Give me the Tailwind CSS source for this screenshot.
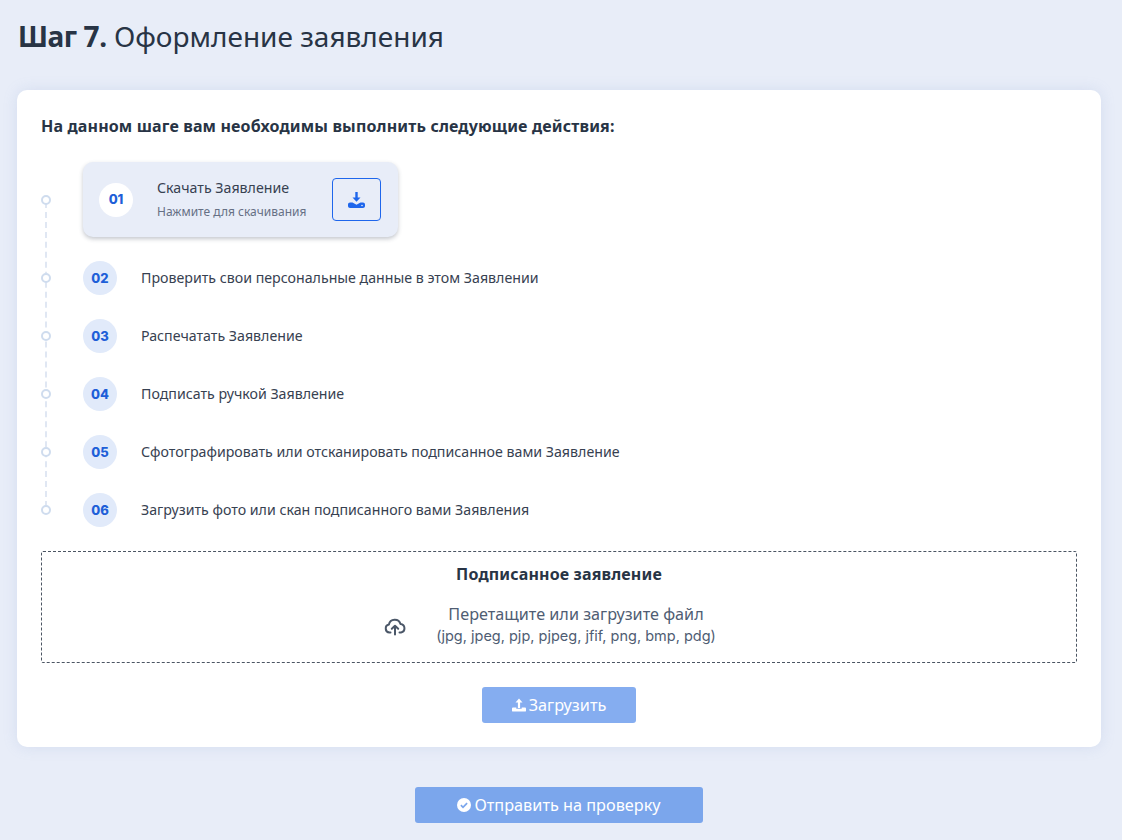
<!DOCTYPE html>
<html lang="en">

<head>
    <meta charset="UTF-8">
    <meta name="viewport" content="width=device-width, initial-scale=1.0">
    <script src="https://cdn.jsdelivr.net/npm/@tailwindcss/browser@4"></script>
    <title>Шаг 7. Оформление заявления</title>
</head>

<body class="bg-[#e8edf8] h-[840px] overflow-hidden font-['Noto_Sans',sans-serif] text-[#1f2937]">
    <div class="pl-[17px] pr-[21px]">

        <!-- Title -->
        <h1 class="h-[90px] pt-[16px] pl-[1px] text-[28px] leading-[40px] text-[#283445]"><b class="font-bold tracking-[-0.4px]">Шаг 7.</b> Оформление заявления</h1>

        <!-- Card -->
        <div class="bg-white rounded-[10px] shadow-[0_0_14px_rgba(140,165,215,0.22)] h-[657px] px-6 pt-[25px]">
            <h2 class="text-[16px] tracking-[0.15px] leading-[22px] font-bold text-[#283445]">На данном шаге вам необходимы выполнить следующие действия:</h2>

            <!-- Steps -->
            <div class="relative mt-[25px] flex flex-col gap-6">
                <div class="absolute left-[4px] top-[40px] h-[305px] border-l-2 border-dashed border-[#e0e7f3]"></div>

                <div class="flex items-center">
                    <span class="relative w-[10px] h-[10px] rounded-full bg-white border-2 border-[#cfdcee]"></span>
                    <div class="ml-[32px] w-[315px] h-[75px] bg-[#e8edf8] rounded-[10px] shadow-[0_2px_4px_rgba(60,70,90,0.3)] flex items-center pl-[16px]">
                        <span class="w-[34px] h-[34px] pt-[1px] rounded-full bg-white flex items-center justify-center font-['Inter',sans-serif] font-extrabold text-[13px] text-[#1e5fd8]">01</span>
                        <div class="ml-[24px] w-[175px]">
                            <p class="-mt-[1px] text-[14.2px] leading-[20px] text-[#374151]">Скачать Заявление</p>
                            <p class="mt-[5px] text-[12px] leading-[18px] text-[#667085]">Нажмите для скачивания</p>
                        </div>
                        <button class="w-[49px] h-[43px] rounded-[4px] border border-[#1e66ec] flex items-center justify-center">
                            <svg width="17" height="16" viewBox="0 0 17 16" fill="#1e66ec"><path d="M7.300 0h2.400v5.500h2.800l-4 4.300-4-4.300h2.800z"/><path d="M0 12.500c0-1.100.9-2 2-2h2.500l4 2.200 4-2.200H15c1.100 0 2 .9 2 2v1.500c0 1.100-.9 2-2 2H2c-1.100 0-2-.9-2-2z"/><circle cx="14" cy="13.500" r=".8" fill="#e8edf8"/></svg>
                        </button>
                    </div>
                </div>

                <div class="flex items-center">
                    <span class="relative w-[10px] h-[10px] rounded-full bg-white border-2 border-[#cfdcee]"></span>
                    <span class="ml-[32px] w-[34px] h-[34px] pt-[1px] rounded-full bg-[#e1eafa] flex items-center justify-center font-['Inter',sans-serif] font-extrabold text-[13px] text-[#1e5fd8]">02</span>
                    <p class="ml-[24px] pb-[1px] text-[14.2px] text-[#374151]">Проверить свои персональные данные в этом Заявлении</p>
                </div>
                <div class="flex items-center">
                    <span class="relative w-[10px] h-[10px] rounded-full bg-white border-2 border-[#cfdcee]"></span>
                    <span class="ml-[32px] w-[34px] h-[34px] pt-[1px] rounded-full bg-[#e1eafa] flex items-center justify-center font-['Inter',sans-serif] font-extrabold text-[13px] text-[#1e5fd8]">03</span>
                    <p class="ml-[24px] pb-[1px] text-[14.2px] text-[#374151]">Распечатать Заявление</p>
                </div>
                <div class="flex items-center">
                    <span class="relative w-[10px] h-[10px] rounded-full bg-white border-2 border-[#cfdcee]"></span>
                    <span class="ml-[32px] w-[34px] h-[34px] pt-[1px] rounded-full bg-[#e1eafa] flex items-center justify-center font-['Inter',sans-serif] font-extrabold text-[13px] text-[#1e5fd8]">04</span>
                    <p class="ml-[24px] pb-[1px] text-[14.2px] text-[#374151]">Подписать ручкой Заявление</p>
                </div>
                <div class="flex items-center">
                    <span class="relative w-[10px] h-[10px] rounded-full bg-white border-2 border-[#cfdcee]"></span>
                    <span class="ml-[32px] w-[34px] h-[34px] pt-[1px] rounded-full bg-[#e1eafa] flex items-center justify-center font-['Inter',sans-serif] font-extrabold text-[13px] text-[#1e5fd8]">05</span>
                    <p class="ml-[24px] pb-[1px] text-[14.2px] text-[#374151]">Сфотографировать или отсканировать подписанное вами Заявление</p>
                </div>
                <div class="flex items-center">
                    <span class="relative w-[10px] h-[10px] rounded-full bg-white border-2 border-[#cfdcee]"></span>
                    <span class="ml-[32px] w-[34px] h-[34px] pt-[1px] rounded-full bg-[#e1eafa] flex items-center justify-center font-['Inter',sans-serif] font-extrabold text-[13px] text-[#1e5fd8]">06</span>
                    <p class="ml-[24px] pb-[1px] text-[14.2px] text-[#374151]">Загрузить фото или скан подписанного вами Заявления</p>
                </div>
            </div>

            <!-- Upload -->
            <div class="mt-6 h-[112px] border border-dashed border-[#4b5563] rounded-[2px] flex flex-col items-center pt-[11px]">
                <h3 class="text-[16px] tracking-[0.15px] leading-[22px] font-bold text-[#283445]">Подписанное заявление</h3>
                <div class="mt-[19px] mr-[18px] flex items-center">
                    <svg class="mt-[3px]" width="22" height="18" viewBox="0 0 22 18" fill="none" stroke="#4b5768" stroke-width="2" stroke-linecap="round" stroke-linejoin="round"><path d="M6.500 14.500H5.500a4 4 0 0 1-.6-7.900A6 6 0 0 1 16.500 6a4.300 4.300 0 0 1 .5 8.500h-1.500"/><path d="M11 16.500V8M7.800 10.800 11 7.700l3.200 3.100"/></svg>
                    <p class="ml-[30px] text-center text-[14.5px] leading-[21px] text-[#4f5d73] font-['Inter',sans-serif]"><span class="font-['Noto_Sans',sans-serif] text-[16.2px]">Перетащите или загрузите файл</span><br>(jpg, jpeg, pjp, pjpeg, jfif, png, bmp, pdg)</p>
                </div>
            </div>

            <div class="mt-6 flex justify-center">
                <button class="w-[154px] h-[36px] rounded-[3px] bg-[#85adf0] text-white text-[16.25px] flex items-center justify-center gap-[3px]">
                    <svg width="14" height="14" viewBox="0 0 14 14" fill="white"><path d="M5.900 10V4.500H3.500L7 .5l3.500 4H8.100V10z"/><path d="M0 10.500c0-.5.4-.9.900-.9h3.400v1.100h5.400V9.600h3.400c.5 0 .9.4.9.900v2.200c0 .5-.4.900-.9.900H.9c-.5 0-.9-.4-.9-.9z"/></svg>
                    Загрузить
                </button>
            </div>
        </div>

        <div class="mt-[40px] flex justify-center">
            <button class="w-[288px] h-[36px] rounded-[3px] bg-[#7ba6ec] text-white text-[16.25px] flex items-center justify-center gap-[3px]">
                <svg width="14" height="14" viewBox="0 0 14 14"><circle cx="7" cy="7" r="7" fill="white"/><path d="M3.900 7.200 6 9.300l4.100-4.200" fill="none" stroke="#7ba6ec" stroke-width="1.700"/></svg>
                Отправить на проверку
            </button>
        </div>
    </div>
</body>

</html>
